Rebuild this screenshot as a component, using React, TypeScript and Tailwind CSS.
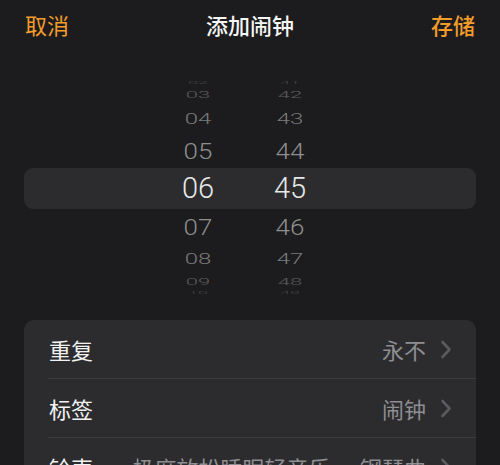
import React from "react"

const cjk = { fontFamily: '"Noto Sans CJK SC", "Noto Sans", sans-serif' }
const digits = { fontFamily: 'Roboto, "Liberation Sans", sans-serif' }

// wheel rows, top to bottom: height of the slot, font size, vertical squash, colour
const wheel = [
  { h: "h-[8px]", size: "text-[18px]", squash: "scale-y-[0.22]", color: "text-[#454545]" },
  { h: "h-[16px]", size: "text-[22px]", squash: "scale-y-[0.42]", color: "text-[#5c5c5c]" },
  { h: "h-[32px]", size: "text-[24px]", squash: "scale-y-[0.6]", color: "text-[#7a7a7a]" },
  { h: "h-[32px]", size: "text-[26px]", squash: "scale-y-[0.85]", color: "text-[#8e8e8e]" },
  { h: "h-[42px]", size: "text-[29px]", squash: "scale-y-100", color: "text-[#e8e8e8]" },
  { h: "h-[36px]", size: "text-[26px]", squash: "scale-y-[0.85]", color: "text-[#8e8e8e]" },
  { h: "h-[28px]", size: "text-[24px]", squash: "scale-y-[0.62]", color: "text-[#7a7a7a]" },
  { h: "h-[18px]", size: "text-[22px]", squash: "scale-y-[0.42]", color: "text-[#5c5c5c]" },
  { h: "h-[4px]", size: "text-[18px]", squash: "scale-y-[0.2]", color: "text-[#454545]" },
]

const hours = ["02", "03", "04", "05", "06", "07", "08", "09", "10"]
const minutes = ["41", "42", "43", "44", "45", "46", "47", "48", "49"]

function WheelColumn({ values }: { values: string[] }) {
  return (
    <div className="flex w-[60px] flex-col items-center font-light" style={digits}>
      {values.map((v, i) => (
        <div key={v} className={`flex w-full items-center justify-center ${wheel[i].h}`}>
          <span className={`inline-block leading-none ${wheel[i].size} ${wheel[i].squash} ${wheel[i].color}`}>
            {v}
          </span>
        </div>
      ))}
    </div>
  )
}

function Chevron() {
  return (
    <svg width="12" height="19" viewBox="0 0 12 19" fill="none" className="shrink-0">
      <polyline
        points="2.5,2 9.5,9.5 2.5,17"
        stroke="#5b5b5f"
        strokeWidth="2.6"
        strokeLinecap="round"
        strokeLinejoin="round"
      />
    </svg>
  )
}

const rows = [
  { label: "重复", value: "永不" },
  { label: "标签", value: "闹钟" },
  { label: "铃声", value: "极度放松睡眠轻音乐 — 钢琴曲" },
]

export default function App() {
  return (
    <div className="h-[465px] w-[500px] overflow-hidden bg-[#1c1c1e]" style={cjk}>
      {/* Header */}
      <div className="flex h-[48px] items-center justify-between px-[25px] text-[22px]">
        <span className="text-[#f39c2b]">取消</span>
        <span className="font-medium text-[#f5f5f5]">添加闹钟</span>
        <span className="font-medium text-[#f39c2b]">存储</span>
      </div>

      {/* Time picker */}
      <div className="relative h-[272px] pt-[31px]">
        <div className="absolute left-6 right-6 top-[120px] h-[41px] rounded-[9px] bg-[#2c2c2e]" />
        <div className="relative flex gap-[32px] pl-[168px]">
          <WheelColumn values={hours} />
          <WheelColumn values={minutes} />
        </div>
      </div>

      {/* Options */}
      <div className="mx-6 rounded-[10px] bg-[#2c2c2e]">
        {rows.map((row, i) => (
          <div key={row.label}>
            {i > 0 && <div className="ml-6 h-px bg-[#3c3c3f]" />}
            <div className="flex h-[58px] items-center gap-4 pl-[25px] pr-6 text-[22px]">
              <span className="shrink-0 text-[#f2f2f2]">{row.label}</span>
              <div className="flex min-w-0 flex-1 items-center justify-end gap-[14px]">
                <span className="whitespace-nowrap text-[#8e8e93]">{row.value}</span>
                <Chevron />
              </div>
            </div>
          </div>
        ))}
      </div>
    </div>
  )
}
